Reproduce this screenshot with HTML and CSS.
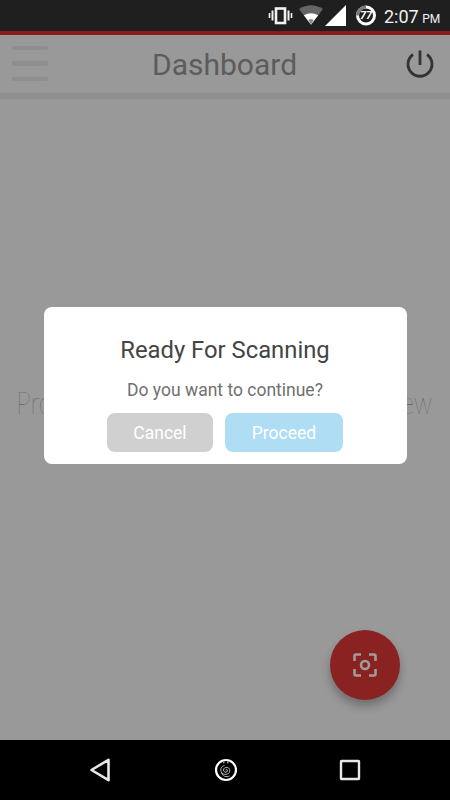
FILE: index.html
```html
<!DOCTYPE html>
<html lang="en">
<head>
	<meta charset="UTF-8">
	<title>Dashboard</title>
	<link rel="stylesheet" href="styles.css">
</head>
<body>
	<div class="status">
		<svg class="status-icons" width="116" height="31" viewBox="0 0 116 31">
			<!-- vibrate -->
			<g fill="none" stroke="#f2f2f2">
				<rect x="8" y="8.500" width="9" height="14.500" stroke-width="2.600"/>
				<path d="M4.500 10.500v10M20.500 10.500v10" stroke-width="2"/>
				<path d="M1.500 13v5M23.500 13v5" stroke-width="1.600"/>
			</g>
			<!-- wifi -->
			<path d="M31 9Q43 1.500 55 9L43 25z" fill="#646464"/>
			<path d="M35.800 15.200Q43 11.200 50.200 15.200L43 24.500z" fill="#fff"/>
			<path d="M40.500 20Q43 18 45.500 20L43 24.500z" fill="#888"/>
			<!-- signal -->
			<path d="M78 5v21H57z" fill="#fff"/>
			<!-- battery -->
			<circle cx="98" cy="15.500" r="8.500" fill="none" stroke="#fff" stroke-width="3"/>
			<path d="M89.500 15.500a8.500 8.500 0 0 1 8.500-8.500" fill="none" stroke="#777" stroke-width="3"/>
			<text class="battery" x="98" y="19" text-anchor="middle">77</text>
		</svg>
		<div class="time">2:07 <small>PM</small></div>
	</div>
	<div class="header">
		<div class="menu">
			<i></i>
			<i></i>
			<i></i>
		</div>
		<h1>Dashboard</h1>
		<svg class="power" width="30" height="30" viewBox="0 0 30 30">
			<path d="M15 1.500v14.500M8 5.500a12 12 0 1 0 14 0" fill="none" stroke="#333" stroke-width="2.800"/>
		</svg>
	</div>
	<div class="content">
		<p class="hint"><span>Pro</span><span>ew</span></p>
		<div class="dialog">
			<h2>Ready For Scanning</h2>
			<p>Do you want to continue?</p>
			<div class="buttons">
				<button class="btn cancel">Cancel</button>
				<button class="btn proceed">Proceed</button>
			</div>
		</div>
		<button class="scan">
			<svg width="24" height="24" viewBox="0 0 24 24" fill="none" stroke="#a09c9c" stroke-width="2.600">
				<path d="M1.500 8V3q0-1.500 1.500-1.500h5M16 1.500h5q1.500 0 1.500 1.500v5M22.500 16v5q0 1.500-1.500 1.500h-5M8 22.500H3q-1.500 0-1.500-1.500v-5"/>
				<circle cx="12" cy="12" r="4"/>
			</svg>
		</button>
	</div>
	<div class="nav">
		<svg width="22" height="26" viewBox="0 0 22 26">
			<path d="M2.500 13L19.500 2.800v20.400z" fill="none" stroke="#e8e8e8" stroke-width="2.600" stroke-linejoin="round"/>
		</svg>
		<svg width="24" height="24" viewBox="-1 0 24 24" fill="none">
			<circle cx="12" cy="12" r="10" stroke="#fff" stroke-width="2.200"/>
			<path d="M12 12.500c-.8-1.500 1.700-1.500 1.500.3c-.3 2.200-4.200 1.700-4-.8c.2-3.700 6.500-3.500 6.300.9c-.2 4.200-7.200 4.700-8.600 1M7.200 13.900c-1.200-3 .5-6 3.300-6.300M7.500 14.500c1 4 5 5 8 3.500" stroke="#bbb" stroke-width="1"/>
			<path d="M9 4.500h1.500M13 4.500h1.500" stroke="#aaa" stroke-width="1.500"/>
		</svg>
		<svg width="22" height="22" viewBox="0 0 22 22">
			<rect x="2" y="2" width="18" height="18" rx=".5" fill="none" stroke="#e8e8e8" stroke-width="2.400"/>
		</svg>
	</div>
</body>
</html>
```

FILE: styles.css
```css
*{
	margin:0;
	padding:0;
	box-sizing:border-box;
}
body{
	display:flex;
	flex-direction:column;
	width:450px;
	height:800px;
	overflow:hidden;
	background:#999;
	font-family:Roboto,"Liberation Sans",sans-serif;
}
svg{
	display:block;
}
h1,h2{
	font-weight:400;
}
button{
	border:0;
	font-family:inherit;
}
.status{
	display:flex;
	justify-content:flex-end;
	height:31px;
	padding-right:9px;
	background:#1f1f1f;
	color:#f2f2f2;
}
.battery{
	fill:#fff;
	font-size:11px;
	font-weight:700;
	font-style:italic;
}
.time{
	width:57px;
	font-size:18px;
	line-height:33px;
	white-space:nowrap;
}
.time small{
	margin-left:-1px;
	font-size:12px;
}
.header{
	display:flex;
	align-items:center;
	justify-content:space-between;
	height:68px;
	padding:0 15px 1px 12px;
	border-top:4px solid #8b1c1c;
	border-bottom:6px solid #8e8e8e;
}
.menu{
	display:flex;
	flex-direction:column;
	gap:11px;
	width:36px;
}
.menu i{
	height:4.500px;
	border-radius:2px;
	background:#8e8e8e;
}
.header h1{
	padding-top:3px;
	margin-right:4px;
	color:#5c5c5c;
	font-size:30px;
	line-height:36px;
}
.content{
	position:relative;
	display:flex;
	flex:1;
	align-items:flex-start;
	justify-content:center;
	padding-top:208px;
}
.hint{
	position:absolute;
	top:284px;
	left:16px;
	right:18px;
	display:flex;
	justify-content:space-between;
	color:#444;
	font-family:Lato,sans-serif;
	font-size:31px;
	font-weight:200;
	line-height:38px;
}
.hint span{
	transform:scaleX(.85);
	transform-origin:left;
}
.hint span:last-child{
	transform:scaleX(.78);
	transform-origin:right;
}
.dialog{
	position:relative;
	width:363px;
	height:157px;
	padding-top:27px;
	border-radius:8px;
	background:#fff;
	text-align:center;
}
.dialog h2{
	color:#444;
	font-size:23.800px;
	line-height:32px;
}
.dialog p{
	margin-top:12px;
	color:#707070;
	font-size:17.500px;
	line-height:24px;
}
.buttons{
	display:flex;
	justify-content:center;
	gap:12px;
	margin-top:11px;
}
.btn{
	height:39px;
	padding-top:1px;
	border-radius:8px;
	color:#fff;
	font-size:17.500px;
}
.cancel{
	width:106px;
	background:#d0d0d0;
}
.proceed{
	width:118px;
	background:#aeddf4;
}
.scan{
	position:absolute;
	right:50px;
	bottom:40px;
	display:flex;
	align-items:center;
	justify-content:center;
	width:70px;
	height:70px;
	border-radius:50%;
	background:#8b2222;
	box-shadow:0 6px 10px rgba(0,0,0,.28);
}
.nav{
	display:flex;
	align-items:center;
	justify-content:space-between;
	height:60px;
	padding:0 89px;
	background:#000;
}
```
